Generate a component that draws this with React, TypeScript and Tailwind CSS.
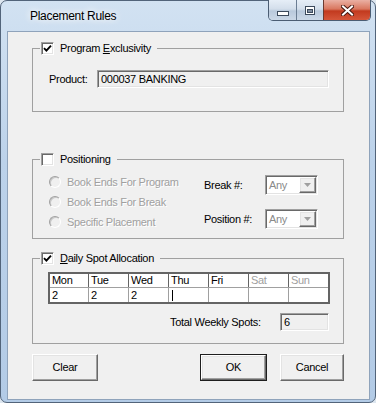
import React from 'react';

const sunken =
  'border border-t-[#a0a0a0] border-l-[#a0a0a0] border-b-white border-r-white shadow-[inset_1px_1px_0_#696969,inset_-1px_-1px_0_#e3e3e3]';
const raised =
  'border border-t-white border-l-white border-b-[#696969] border-r-[#696969] shadow-[inset_-1px_-1px_0_#a0a0a0,inset_1px_1px_0_#e3e3e3]';
const disabledText = 'text-[#a0a0a0] [text-shadow:1px_1px_0_#ffffff]';

const Checkbox: React.FC<{ checked?: boolean }> = ({ checked }) => (
  <div className={`w-[13px] h-[13px] bg-white flex items-center justify-center ${sunken}`}>
    {checked && (
      <svg width="9" height="9" viewBox="0 0 9 9">
        <polyline points="1,4.2 3.4,6.6 8,1.6" fill="none" stroke="#000" strokeWidth="1.9" />
      </svg>
    )}
  </div>
);

const Legend: React.FC<{ checked?: boolean; children: React.ReactNode }> = ({ checked, children }) => (
  <legend className="ml-[7px] pl-[1px] pr-[6px]">
    <div className="flex items-center gap-[6px] h-[13px]">
      <Checkbox checked={checked} />
      <span className="leading-[13px]">{children}</span>
    </div>
  </legend>
);

const Radio: React.FC<{ label: string }> = ({ label }) => (
  <div className="h-[20px] flex items-center gap-[6px]">
    <div className="w-[12px] h-[12px] rounded-full bg-[#f0f0f0] border border-t-[#a0a0a0] border-l-[#a0a0a0] border-b-white border-r-white shadow-[inset_1px_1px_0_#c8c8c8]" />
    <span className={disabledText}>{label}</span>
  </div>
);

const Combo: React.FC = () => (
  <div className={`w-[53px] h-[20px] flex items-center bg-white pl-[3px] ${sunken}`}>
    <span className="text-[#8a8a8a]">Any</span>
    <div className={`ml-auto mr-[1px] w-[17px] h-[16px] bg-[#f0f0f0] flex items-center justify-center ${raised}`}>
      <svg width="7" height="4" viewBox="0 0 7 4">
        <polygon points="0,0 7,0 3.5,4" fill="#a0a0a0" />
      </svg>
    </div>
  </div>
);

const days = [
  { d: 'Mon', v: '2' },
  { d: 'Tue', v: '2' },
  { d: 'Wed', v: '2' },
  { d: 'Thu', v: '' },
  { d: 'Fri', v: '' },
  { d: 'Sat', v: '', off: true },
  { d: 'Sun', v: '', off: true },
];

const CaptionButtons: React.FC = () => (
  <div className="flex h-[21px] border border-t-0 border-[#4b5d73] rounded-b-[5px] overflow-hidden">
    <div className="w-[27px] flex items-end justify-center pb-[4px] bg-[linear-gradient(180deg,#e6eef7_0%,#d3deeb_45%,#b9c9dc_55%,#cbd8e7_100%)]">
      <svg width="12" height="5" viewBox="0 0 12 5">
        <rect x="0.5" y="0.5" width="11" height="4" fill="#fff" stroke="#3c4a5c" />
      </svg>
    </div>
    <div className="w-px bg-[#6b7d93]" />
    <div className="w-[26px] flex items-center justify-center bg-[linear-gradient(180deg,#e6eef7_0%,#d3deeb_45%,#b9c9dc_55%,#cbd8e7_100%)]">
      <svg width="10" height="9" viewBox="0 0 10 9">
        <rect x="0.5" y="0.5" width="9" height="8" fill="#fff" stroke="#3c4a5c" />
        <rect x="2.5" y="3.5" width="5" height="3" fill="#7f8da0" stroke="#3c4a5c" />
      </svg>
    </div>
    <div className="w-px bg-[#6b3a30]" />
    <div className="w-[46px] flex items-center justify-center bg-[linear-gradient(180deg,#eab0a3_0%,#d9775f_45%,#c23a1f_55%,#d5563a_100%)]">
      <svg width="13" height="11" viewBox="0 0 13 11">
        <path d="M2 1.5 L11 9.5 M11 1.5 L2 9.5" stroke="#4a1a12" strokeWidth="4" strokeLinecap="square" />
        <path d="M2 1.5 L11 9.5 M11 1.5 L2 9.5" stroke="#ffffff" strokeWidth="2" strokeLinecap="square" />
      </svg>
    </div>
  </div>
);

const App: React.FC = () => {
  return (
    <div className="w-[376px] h-[403px] bg-[#dde6ef]">
      <div className="w-[376px] h-[403px] flex flex-col rounded-[7px] border border-[#52647a] bg-[linear-gradient(180deg,#d2e2f2_0%,#bcd2ea_40%,#b3cbe6_100%)] font-['Liberation_Sans',Arial,sans-serif]">
        {/* Title bar */}
        <div className="h-[30px] flex items-start pl-[29px] pr-[4px] shrink-0">
          <span className="mt-[8px] text-[12px] leading-[15px] tracking-[-0.3px] text-black [text-shadow:0_0_6px_#fff,0_0_10px_#fff]">
            Placement Rules
          </span>
          <div className="ml-auto -mt-px">
            <CaptionButtons />
          </div>
        </div>

        {/* Client area */}
        <div className="flex-1 ml-[6px] mr-[5px] mb-[2px] border border-[#8fa3bb] bg-[#f0f0f0] pl-[24px] pt-[10px] text-[11px] leading-[13px] tracking-[-0.3px] text-black">
          {/* Program Exclusivity */}
          <fieldset className="w-[312px] h-[70px] border border-[#a0a0a0]">
            <Legend checked>
              Program <u className="underline-offset-1">E</u>xclusivity
            </Legend>
            <div className="mt-[15px] pl-[16px] flex items-center">
              <span className="w-[48px]">Product:</span>
              <div className={`w-[232px] h-[18px] flex items-center pl-[3px] bg-[#f0f0f0] ${sunken}`}>
                000037 BANKING
              </div>
            </div>
          </fieldset>

          {/* Positioning */}
          <fieldset className="mt-[41px] w-[312px] h-[86px] border border-[#a0a0a0]">
            <Legend>Positioning</Legend>
            <div className="flex">
              <div className="w-[171px] pl-[16px] pt-[6px] flex flex-col">
                <Radio label="Book Ends For Program" />
                <Radio label="Book Ends For Break" />
                <Radio label="Specific Placement" />
              </div>
              <div className="pt-[9px] flex flex-col gap-[14px]">
                <div className="flex items-center">
                  <span className="w-[61px]">Break #:</span>
                  <Combo />
                </div>
                <div className="flex items-center">
                  <span className="w-[61px]">Position #:</span>
                  <Combo />
                </div>
              </div>
            </div>
          </fieldset>

          {/* Daily Spot Allocation */}
          <fieldset className="mt-[13px] w-[312px] h-[92px] border border-[#a0a0a0]">
            <Legend checked>
              <u className="underline-offset-1">D</u>aily Spot Allocation
            </Legend>
            <div className="ml-[15px] mt-[7px] w-[282px] border-2 border-[#646464] bg-white">
              <div className="flex h-[14px] border-b border-[#a0a0a0]">
                {days.map((x, i) => (
                  <div
                    key={x.d}
                    className={`${i === 0 ? 'w-[38px]' : 'w-[40px] border-l border-[#646464]'} pl-[2px] ${x.off ? 'text-[#a0a0a0]' : ''}`}
                  >
                    {x.d}
                  </div>
                ))}
              </div>
              <div className="flex h-[14px]">
                {days.map((x, i) => (
                  <div
                    key={x.d}
                    className={`${i === 0 ? 'w-[38px]' : 'w-[40px] border-l border-[#a0a0a0]'} pl-[2px] flex items-center`}
                  >
                    {x.v}
                    {x.d === 'Thu' && <div className="ml-[1px] w-px h-[11px] bg-black" />}
                  </div>
                ))}
              </div>
            </div>
            <div className="mt-[9px] ml-[137px] flex items-center">
              <span className="w-[110px]">Total Weekly Spots:</span>
              <div className={`w-[49px] h-[18px] flex items-center pl-[3px] bg-[#f0f0f0] ${sunken}`}>6</div>
            </div>
          </fieldset>

          {/* Buttons */}
          <div className="mt-[10px] w-[312px] flex items-center">
            <button className={`w-[66px] h-[27px] flex items-center justify-center bg-[#f0f0f0] ${raised}`}>Clear</button>
            <div className="ml-auto w-[67px] h-[27px] border border-[#1e1e1e]">
              <button className={`w-full h-full flex items-center justify-center bg-[#f0f0f0] ${raised}`}>OK</button>
            </div>
            <button className={`ml-[13px] w-[64px] h-[27px] flex items-center justify-center bg-[#f0f0f0] ${raised}`}>Cancel</button>
          </div>
        </div>
      </div>
    </div>
  );
};

export default App;
